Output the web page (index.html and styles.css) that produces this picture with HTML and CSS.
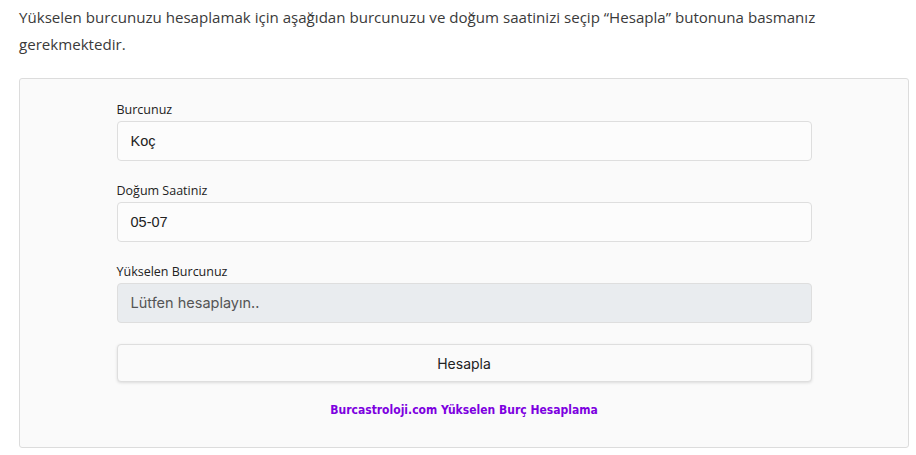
FILE: index.html
```html
<!DOCTYPE html>
<html lang="tr">
<head>
  <meta charset="UTF-8">
  <title>Yükselen Burç Hesaplama</title>
  <link rel="stylesheet" href="styles.css">
</head>
<body>
  <div class="content">
    <p class="intro">Yükselen burcunuzu hesaplamak için aşağıdan burcunuzu ve doğum saatinizi seçip “Hesapla” butonuna basmanız gerekmektedir.</p>

    <div class="calc-box">
      <div class="calc-form">
        <div class="form-group">
          <label for="burc">Burcunuz</label>
          <div class="field" id="burc">Koç</div>
        </div>
        <div class="form-group">
          <label for="saat">Doğum Saatiniz</label>
          <div class="field" id="saat">05-07</div>
        </div>
        <div class="form-group">
          <label for="sonuc">Yükselen Burcunuz</label>
          <div class="field result" id="sonuc">Lütfen hesaplayın..</div>
        </div>
        <button class="calc-btn">Hesapla</button>
        <div class="credit"><a href="#">Burcastroloji.com Yükselen Burç Hesaplama</a></div>
      </div>
    </div>
  </div>
</body>
</html>
```

FILE: styles.css
```css
body {
  margin: 0;
  background-color: #fff;
  font-family: "Open Sans", "Noto Sans", sans-serif;
  color: #333;
}
.content {
  padding: 4px 7px 0 19px;
}
.intro {
  margin: 0 0 20px;
  font-size: 15.1px;
  line-height: 27px;
  color: #3a3a3a;
}
.calc-box {
  background-color: #fafafa;
  border: 1px solid #dcdcdc;
  border-radius: 3px;
  padding: 22px 0 0;
  height: 346px;
}
.calc-form {
  width: 695px;
  margin: 0 auto;
}
.form-group {
  margin-bottom: 21px;
}
.form-group label {
  display: block;
  font-size: 12.5px;
  line-height: 18px;
  margin-bottom: 2px;
  color: #222;
}
.field {
  box-sizing: border-box;
  height: 40px;
  padding: 0 13px;
  line-height: 38px;
  background-color: #fcfcfc;
  border: 1px solid #dedede;
  border-radius: 4px;
  font-family: "Liberation Sans", Arial, sans-serif;
  font-size: 14.5px;
  color: #222;
}
.field.result {
  background-color: #e9ecef;
  font-family: Inter, "Open Sans", sans-serif;
  font-size: 14.5px;
  color: #555;
}
.calc-btn {
  display: block;
  width: 100%;
  height: 38px;
  margin-top: 0;
  background-color: #fafafa;
  border: 1px solid #dedede;
  border-radius: 4px;
  box-shadow: 0 1px 3px rgba(0,0,0,0.12);
  font-family: Inter, "Open Sans", sans-serif;
  font-size: 14px;
  color: #222;
  cursor: pointer;
}
.credit {
  text-align: center;
  margin-top: 21px;
  font-size: 12px;
  line-height: 14px;
}
.credit a {
  font-family: "DejaVu Sans Condensed", "DejaVu Sans", Verdana, sans-serif;
  font-weight: bold;
  color: #7d00e0;
  text-decoration: none;
}
```
